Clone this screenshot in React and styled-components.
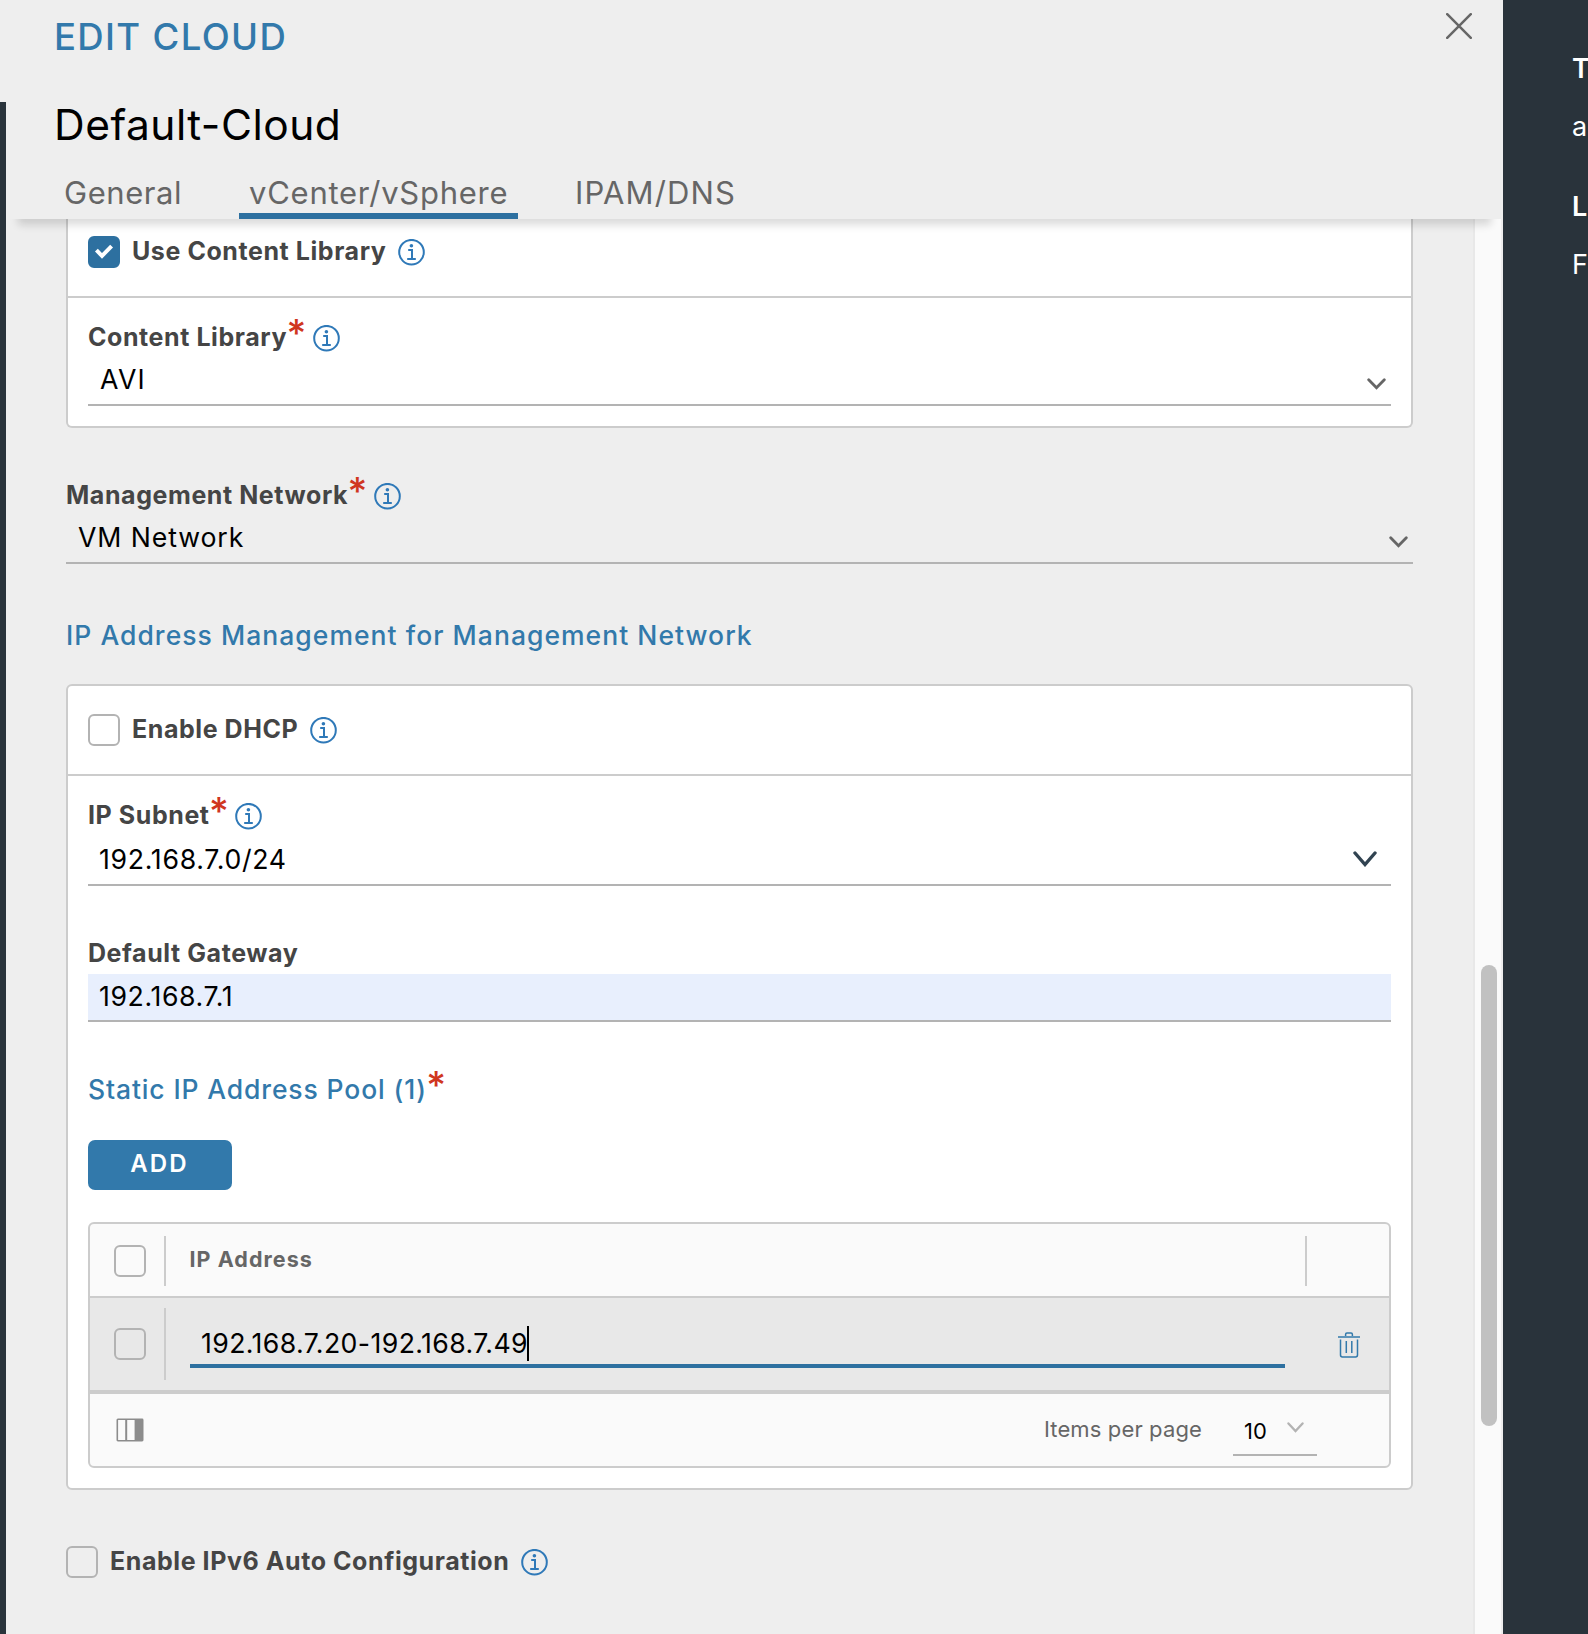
import React from 'react';
import styled, { createGlobalStyle } from 'styled-components';

const color = {
  page: '#29333b',
  modal: '#eeeeee',
  panel: '#ffffff',
  border: '#cccccc',
  line: '#b3b3b3',
  link: '#3279ab',
  action: '#2d70a0',
  info: '#2f79b8',
  label: '#454545',
  muted: '#666666',
  danger: '#d0361f',
};

const GlobalStyle = createGlobalStyle`
  * { box-sizing: border-box; }
  html, body { margin: 0; height: 100%; }
  body {
    background: ${color.page};
    font-family: Inter, "Open Sans", sans-serif;
    overflow: hidden;
  }
`;

const Screen = styled.div`
  display: flex;
  width: 1588px;
  height: 1634px;
  overflow: hidden;
  background: ${color.page};
`;

const LeftEdge = styled.div`
  width: 6px;
  height: 102px;
  flex: none;
  background: ${color.modal};
`;

const Modal = styled.main`
  display: flex;
  flex-direction: column;
  width: 1497px;
  flex: none;
  background: ${color.modal};
`;

const HelpPanel = styled.aside`
  flex: none;
  width: 85px;
  overflow: hidden;
  padding: 53px 0 0 69px;
  color: #fff;
  white-space: nowrap;
`;

const HelpLine = styled.p`
  margin: 0 0 ${(p) => p.$after || 0}px;
  font-size: 27px;
  line-height: 32px;
  font-weight: ${(p) => (p.$strong ? 600 : 400)};
`;

const Header = styled.header`
  position: relative;
  z-index: 1;
  flex: none;
  height: 219px;
  padding-top: 13px;
`;

const HeaderTop = styled.div`
  display: flex;
  justify-content: space-between;
  align-items: flex-start;
  padding: 0 31px 0 48px;
`;

const Title = styled.h1`
  margin: 0;
  color: ${color.link};
  font-size: 36.5px;
  font-weight: 500;
  line-height: 48px;
  letter-spacing: 1.35px;
`;

const CloseButton = styled.button`
  display: flex;
  padding: 0;
  border: 0;
  background: none;
  color: ${color.muted};
`;

const CloudName = styled.h2`
  margin: 36px 0 0 48px;
  color: #000;
  font-size: 42.5px;
  font-weight: 400;
  line-height: 56px;
  letter-spacing: 0.48px;
`;

const Tabs = styled.nav`
  display: flex;
  gap: 49px;
  margin: 21px 0 0 48px;
`;

const Tab = styled.a`
  width: ${(p) => p.$width}px;
  height: 45px;
  padding-left: ${(p) => p.$pad}px;
  border-bottom: 6px solid ${(p) => (p.$active ? color.action : 'transparent')};
  color: ${color.muted};
  font-size: 31px;
  font-weight: 400;
  line-height: 38px;
  letter-spacing: ${(p) => p.$spacing}px;
  white-space: nowrap;
`;

const Body = styled.div`
  display: flex;
  flex: 1;
  min-height: 0;
  overflow: hidden;
`;

const HeaderShadow = styled.div`
  position: absolute;
  left: 12px;
  right: 12px;
  bottom: 0;
  height: 30px;
  z-index: -1;
  box-shadow: 0 6px 8px rgba(0, 0, 0, 0.14);
`;

const HeaderSurface = styled.div`
  position: absolute;
  inset: 0;
  z-index: -1;
  background: ${color.modal};
`;

const Content = styled.div`
  width: 1467px;
  flex: none;
  padding: 0 60px;
`;

const ScrollTrack = styled.div`
  width: 30px;
  flex: none;
  padding: 746px 4px 0 6px;
  background: #fafafa;
  border-left: 2px solid #e8e8e8;
  border-right: 2px solid #ededed;
`;

const ScrollThumb = styled.div`
  width: 16px;
  height: 461px;
  border-radius: 8px;
  background: #c1c1c1;
`;

const Panel = styled.section`
  background: ${color.panel};
  border: 2px solid ${color.border};
  border-radius: 6px;
  ${(p) => p.$cut && 'border-top: 0; border-top-left-radius: 0; border-top-right-radius: 0;'}
`;

const PanelHead = styled.div`
  display: flex;
  align-items: center;
  height: ${(p) => p.$height}px;
  padding: 0 20px;
  border-bottom: 2px solid ${color.border};
`;

const PanelBody = styled.div`
  padding: 26px 20px 20px;
`;

const CheckRow = styled.div`
  display: flex;
  align-items: center;
  gap: 12px;
`;

const Box = styled.span`
  display: flex;
  align-items: center;
  justify-content: center;
  flex: none;
  width: 32px;
  height: 32px;
  border: 2px solid ${(p) => (p.$checked ? color.action : color.line)};
  border-radius: 6px;
  background: ${(p) => (p.$checked ? color.action : 'transparent')};
`;

const LabelText = styled.span`
  padding-bottom: 3px;
  color: ${color.label};
  font-size: 25px;
  font-weight: 670;
  line-height: 28px;
  letter-spacing: 0.57px;
  white-space: nowrap;
`;

const FieldLabel = styled.div`
  display: flex;
  align-items: center;
  height: 28px;
`;

const Star = styled.span`
  align-self: flex-start;
  width: 19px;
  margin: ${(p) => p.$top}px 7px 0 -0.5px;
  color: ${color.danger};
  font-size: 38px;
  font-weight: 500;
  letter-spacing: 0;
  line-height: 36px;
`;

const Field = styled.div`
  margin-top: ${(p) => p.$gap || 0}px;
`;

const Value = styled.div`
  display: flex;
  align-items: center;
  justify-content: space-between;
  height: ${(p) => p.$height || 54}px;
  margin-top: ${(p) => p.$gap || 0}px;
  padding: ${(p) => p.$drop || 0}px ${(p) => p.$right || 0}px ${(p) => p.$lift || 0}px ${(p) => p.$left || 11}px;
  border-bottom: 2px solid ${color.line};
  background: ${(p) => (p.$filled ? '#e8effd' : 'transparent')};
  color: #000;
  font-size: 26.7px;
  font-weight: 400;
  letter-spacing: ${(p) => p.$spacing || 0.7}px;
`;

const SectionTitle = styled.h3`
  display: flex;
  margin: ${(p) => p.$gap}px 0 0;
  color: ${color.link};
  font-size: 26.5px;
  font-weight: 500;
  line-height: 32px;
  letter-spacing: ${(p) => p.$spacing}px;
  white-space: nowrap;
`;

const AddButton = styled.button`
  display: block;
  width: 144px;
  height: 50px;
  margin: 35px 0 32px;
  padding: 0 1px 4px 0;
  border: 0;
  border-radius: 7px;
  background: ${color.link};
  color: #fff;
  font: 600 24px Inter, sans-serif;
  letter-spacing: 2.2px;
`;

const Table = styled.div`
  border: 2px solid ${color.border};
  border-radius: 6px;
  background: #fafafa;
  overflow: hidden;
`;

const TableHead = styled.div`
  display: flex;
  align-items: center;
  height: 74px;
  padding: 2px 0 0 24px;
  border-bottom: 2px solid ${color.border};
`;

const TableRow = styled.div`
  display: flex;
  align-items: center;
  height: 96px;
  padding-left: 24px;
  border-bottom: 4px solid ${color.border};
  background: #e8e8e8;
`;

const Divider = styled.span`
  flex: none;
  width: 2px;
  height: ${(p) => p.$height}px;
  margin-left: ${(p) => p.$before || 0}px;
  margin-right: ${(p) => p.$after}px;
  background: ${color.border};
`;

const ColumnName = styled.span`
  flex: 1;
  padding-bottom: 4px;
  color: ${color.muted};
  font-size: 21.5px;
  font-weight: 650;
  letter-spacing: 1.05px;
`;

const RowInput = styled.div`
  display: flex;
  align-items: center;
  flex: 1;
  height: 48px;
  padding: 2px 0 0 11px;
  border-bottom: 4px solid ${color.action};
  color: #000;
  font-size: 26.7px;
  font-weight: 400;
  letter-spacing: 0.38px;
  white-space: nowrap;
`;

const Caret = styled.span`
  width: 2px;
  height: 35px;
  margin-left: -1px;
  background: #000;
`;

const RowActions = styled.div`
  display: flex;
  width: 104px;
  flex: none;
  padding: 2px 0 0 53px;
`;

const TableFoot = styled.div`
  display: flex;
  align-items: center;
  height: 72px;
  padding: 0 72px 0 26px;
`;

const PageLabel = styled.span`
  margin-left: auto;
  padding-bottom: 2px;
  color: ${color.muted};
  font-size: 22px;
  font-weight: 400;
  letter-spacing: 0.13px;
`;

const PageSelect = styled.div`
  display: flex;
  align-items: center;
  justify-content: space-between;
  width: 84px;
  height: 46px;
  margin: 6px 0 0 31px;
  padding: 0 13px 2px 11px;
  border-bottom: 2px solid ${color.line};
  color: #000;
  font-size: 22px;
`;

const Lifted = styled.span`
  display: flex;
  padding-bottom: ${(p) => p.$by}px;
`;

const Lowered = styled.span`
  display: flex;
  padding-top: ${(p) => p.$by}px;
`;

const Spacer = styled.div`
  height: ${(p) => p.$height}px;
`;

const InfoIcon = () => (
  <svg width="27" height="27" viewBox="0 0 27 27" fill="none" stroke={color.info} strokeWidth="2">
    <circle cx="13.5" cy="13.2" r="12.3" />
    <circle cx="13.4" cy="6.8" r="1.8" fill={color.info} stroke="none" />
    <path d="M10.2 11.1h3.8v9M9.2 20h8.6" />
  </svg>
);

const Chevron = ({ width, height, stroke, weight }) => (
  <svg width={width} height={height} viewBox={`0 0 ${width} ${height}`} fill="none" stroke={stroke} strokeWidth={weight} strokeLinecap="round">
    <path d={`M${weight / 2 + 0.3} ${weight / 2 + 0.3}L${width / 2} ${height - weight / 2 - 0.8}L${width - weight / 2 - 0.3} ${weight / 2 + 0.3}`} />
  </svg>
);

const CheckIcon = () => (
  <svg width="20" height="16" viewBox="0 0 20 16" fill="none" stroke="#fff" strokeWidth="4">
    <path d="M2.4 6.2L8 11.8L17.6 2.2" />
  </svg>
);

const CloseIcon = () => (
  <svg width="26" height="26" viewBox="0 0 26 26" fill="none" stroke="currentColor" strokeWidth="2.5" strokeLinecap="round">
    <path d="M1.2 1.2L24.8 24.8M24.8 1.2L1.2 24.8" />
  </svg>
);

const TrashIcon = () => (
  <svg width="22" height="26" viewBox="0 0 22 26" fill="none" stroke={color.link} strokeWidth="1.5">
    <path d="M0 5h22M7.6 4V2.4Q7.6 1 9 1h4q1.4 0 1.4 1.4V4M2.5 7.5v15.6Q2.5 25 4.4 25h13.2q1.9 0 1.9-1.9V7.5M8.3 9v12M13.8 9v12" />
  </svg>
);

const ColumnsIcon = () => (
  <svg width="28" height="24" viewBox="0 0 28 24" fill="none" stroke="#8c8c8c" strokeWidth="1.6">
    <rect x="1.3" y="1.3" width="25.4" height="21.4" rx="0.6" />
    <path d="M10.2 1v22" strokeWidth="2" />
    <path d="M18.6 1h8v22h-8z" fill="#8c8c8c" stroke="none" />
  </svg>
);

const Checkbox = ({ checked, children }) => (
  <CheckRow>
    <Box $checked={checked}>{checked && <CheckIcon />}</Box>
    <LabelText>{children}</LabelText>
    <InfoIcon />
  </CheckRow>
);

const RequiredLabel = ({ children }) => (
  <FieldLabel>
    <LabelText>{children}</LabelText>
    <Star $top={-9}>*</Star>
    <InfoIcon />
  </FieldLabel>
);

export default function App() {
  return (
    <Screen>
      <GlobalStyle />
      <LeftEdge />
      <Modal>
        <Header>
          <HeaderShadow />
          <HeaderSurface />
          <HeaderTop>
            <Title>EDIT CLOUD</Title>
            <CloseButton aria-label="Close"><CloseIcon /></CloseButton>
          </HeaderTop>
          <CloudName>Default-Cloud</CloudName>
          <Tabs>
            <Tab $width={136} $pad={10} $spacing={0.56}>General</Tab>
            <Tab $width={279} $pad={10} $spacing={0.75} $active>vCenter/vSphere</Tab>
            <Tab $width={178} $pad={8} $spacing={1.12}>IPAM/DNS</Tab>
          </Tabs>
        </Header>
        <Body>
          <Content>
            <Panel $cut>
              <PanelHead $height={79}>
                <Lifted $by={11}><Checkbox checked>Use Content Library</Checkbox></Lifted>
              </PanelHead>
              <PanelBody>
                <RequiredLabel>Content Library</RequiredLabel>
                <Value $left={12} $right={5} $drop={2} $spacing={1.3}>
                  AVI
                  <Lowered $by={9}><Chevron width={19} height={12} stroke="#666666" weight={2.8} /></Lowered>
                </Value>
              </PanelBody>
            </Panel>
            <Field $gap={54}>
              <RequiredLabel>Management Network</RequiredLabel>
              <Value $left={12} $right={5} $drop={2} $spacing={0.9}>
                VM Network
                <Lowered $by={9}><Chevron width={19} height={12} stroke="#666666" weight={2.8} /></Lowered>
              </Value>
            </Field>
            <SectionTitle $gap={55} $spacing={1.04}>IP Address Management for Management Network</SectionTitle>
            <Spacer $height={33} />
            <Panel>
              <PanelHead $height={90}>
                <Checkbox>Enable DHCP</Checkbox>
              </PanelHead>
              <PanelBody>
                <RequiredLabel>IP Subnet</RequiredLabel>
                <Value $height={56} $right={14} $drop={4}>
                  192.168.7.0/24
                  <Chevron width={24} height={16} stroke="#314351" weight={3.4} />
                </Value>
                <Field $gap={54}>
                  <FieldLabel><LabelText>Default Gateway</LabelText></FieldLabel>
                  <Value $height={48} $gap={6} $lift={2} $filled $spacing={0.6}>192.168.7.1</Value>
                </Field>
                <SectionTitle $gap={51} $spacing={0.87}>
                  Static IP Address Pool (1)
                  <Star $top={-6}>*</Star>
                </SectionTitle>
                <AddButton>ADD</AddButton>
                <Table>
                  <TableHead>
                    <Box />
                    <Divider $height={50} $before={18} $after={23.5} />
                    <ColumnName>IP Address</ColumnName>
                    <Divider $height={50} $after={82} />
                  </TableHead>
                  <TableRow>
                    <Box />
                    <Divider $height={72} $before={18} $after={24} />
                    <RowInput>192.168.7.20-192.168.7.49<Caret /></RowInput>
                    <RowActions><TrashIcon /></RowActions>
                  </TableRow>
                  <TableFoot>
                    <ColumnsIcon />
                    <PageLabel>Items per page</PageLabel>
                    <PageSelect>
                      10
                      <Lifted $by={7}><Chevron width={17} height={11} stroke="#b3b3b3" weight={2.3} /></Lifted>
                    </PageSelect>
                  </TableFoot>
                </Table>
              </PanelBody>
            </Panel>
            <Spacer $height={56} />
            <Checkbox>Enable IPv6 Auto Configuration</Checkbox>
          </Content>
          <ScrollTrack><ScrollThumb /></ScrollTrack>
        </Body>
      </Modal>
      <HelpPanel>
        <HelpLine $strong $after={26}>T</HelpLine>
        <HelpLine $after={48}>a</HelpLine>
        <HelpLine $strong $after={26}>L</HelpLine>
        <HelpLine>F</HelpLine>
      </HelpPanel>
    </Screen>
  );
}
